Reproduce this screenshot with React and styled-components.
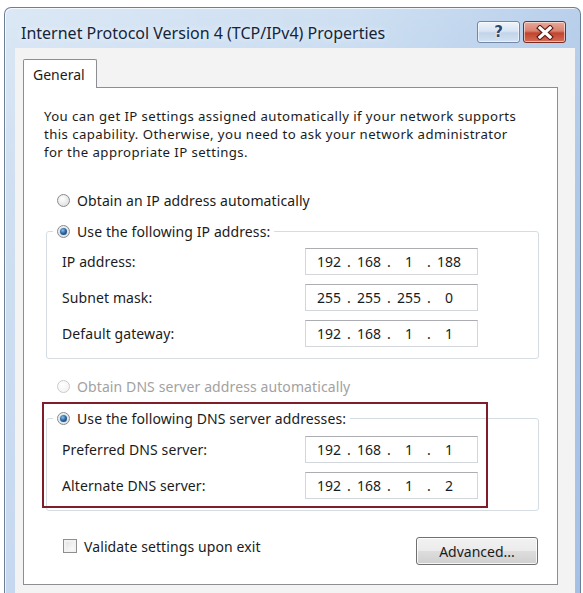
import React from "react";
import styled, { createGlobalStyle } from "styled-components";

const Global = createGlobalStyle`
  html, body { margin: 0; padding: 0; background: #ffffff; }
  body { font-family: "Noto Sans", "Open Sans", sans-serif; color: #1b1b1b; }
  * { box-sizing: border-box; }
`;

const Window = styled.div`
  margin: 7px 0 0 4px;
  width: 577px;
  height: 600px;
  border: 1px solid #6b7f96;
  border-bottom: none;
  border-radius: 7px 7px 0 0;
  background:
    linear-gradient(90deg, rgba(255,255,255,0.25) 0%, rgba(255,255,255,0) 60%, rgba(120,160,215,0.25) 100%),
    linear-gradient(180deg, #cfe0f2 0%, #c0d5ed 30%, #b3cbea 100%);
  padding: 0 5px 0 10px;
  display: flex;
  flex-direction: column;
  overflow: hidden;
  box-shadow: inset 1px 1px 0 rgba(255,255,255,0.7);
`;

const TitleBar = styled.div`
  height: 40px;
  display: flex;
  align-items: flex-start;
  padding-left: 6px;
`;

const Title = styled.div`
  flex: 1;
  margin-top: 14px;
  font-size: 16px;
  line-height: 22px;
  color: #13253b;
  text-shadow: 0 0 6px rgba(255,255,255,0.9);
`;

const CaptionButton = styled.div`
  width: 43px;
  height: 22px;
  margin-top: 13px;
  border-radius: 3px;
  display: flex;
  align-items: center;
  justify-content: center;
  border: 1px solid ${p => (p.$close ? "#7a2b24" : "#7189a6")};
  background: ${p =>
    p.$close
      ? "linear-gradient(180deg, #eaa899 0%, #d9826f 45%, #c0452f 55%, #d66d55 100%)"
      : "linear-gradient(180deg, #eef4fb 0%, #d9e5f3 45%, #c3d4ea 55%, #d3e2f3 100%)"};
  box-shadow: inset 0 0 0 1px rgba(255,255,255,0.55);
  margin-left: ${p => (p.$close ? "3px" : "0")};
  margin-right: ${p => (p.$close ? "9px" : "0")};
`;

const HelpGlyph = styled.span`
  font-family: "DejaVu Sans", sans-serif;
  font-weight: bold;
  font-size: 15px;
  color: #2a4a70;
  text-shadow: 0 0 2px #ffffff, 0 0 1px #ffffff;
  line-height: 1;
`;

const Client = styled.div`
  flex: 1;
  background: #f3f3f3;
  padding: 11px 16px 0 8px;
  display: flex;
  flex-direction: column;
`;

const Tab = styled.div`
  width: 74px;
  height: 29px;
  border: 1px solid #8c8e94;
  border-bottom: none;
  background: #ffffff;
  font-size: 14px;
  padding: 5px 0 0 9px;
  margin-bottom: -1px;
  position: relative;
  z-index: 1;
  border-radius: 2px 2px 0 0;
`;

const Panel = styled.div`
  width: 535px;
  height: 498px;
  border: 1px solid #8c8e94;
  background: #ffffff;
  padding: 19px 18px 0 20px;
  display: flex;
  flex-direction: column;
`;

const Intro = styled.p`
  margin: 0;
  font-size: 13.2px;
  letter-spacing: 0.42px;
  line-height: 18px;
`;

const OptionRow = styled.div`
  height: 20px;
  display: flex;
  align-items: center;
  gap: 7px;
  font-size: 14px;
  letter-spacing: 0.1px;
  margin-left: 13px;
  margin-top: ${p => p.$top || 0}px;
  color: ${p => (p.$disabled ? "#a2a2a2" : "#1b1b1b")};
`;

const Radio = styled.span`
  width: 13px;
  height: 13px;
  border-radius: 50%;
  border: 1px solid ${p => (p.$disabled ? "#cbcbcb" : "#8b8b8b")};
  background: ${p =>
    p.$disabled
      ? "radial-gradient(circle at 40% 35%, #ffffff 0%, #f0f0f0 100%)"
      : "radial-gradient(circle at 40% 35%, #ffffff 0%, #d8d8d8 100%)"};
  display: flex;
  align-items: center;
  justify-content: center;
  flex-shrink: 0;
  &::after {
    content: "";
    display: ${p => (p.$checked ? "block" : "none")};
    width: 7px;
    height: 7px;
    border-radius: 50%;
    background: radial-gradient(circle at 40% 35%, #8fc0ea 0%, #2d6aa5 45%, #12304f 100%);
    box-shadow: 0 0 0 1px #d6e6f4;
  }
`;

const Group = styled.div`
  margin: ${p => p.$top}px 0 0 2px;
  border: 1px solid #d5dde3;
  border-radius: 3px;
  padding: 0 0 11px 15px;
  display: flex;
  flex-direction: column;
`;

const Legend = styled.div`
  margin: -11px 0 0 -9px;
  height: 20px;
  padding: 0 4px;
  align-self: flex-start;
  background: #ffffff;
  display: flex;
  align-items: center;
  gap: 7px;
  font-size: 14px;
  letter-spacing: 0.1px;
`;

const Rows = styled.div`
  margin-top: ${p => p.$top}px;
  display: flex;
  flex-direction: column;
  gap: 9px;
`;

const FieldRow = styled.div`
  display: flex;
  align-items: center;
  height: 27px;
  font-size: 14px;
  letter-spacing: 0.1px;
`;

const FieldLabel = styled.span`
  width: 243px;
`;

const IpBox = styled.div`
  width: 173px;
  height: 27px;
  border: 1px solid #d3d6da;
  border-top-color: #abadb3;
  background: #ffffff;
  display: flex;
  align-items: center;
  padding-left: 6px;
  font-size: 14px;
  letter-spacing: 0;
`;

const Octet = styled.span`
  width: 34px;
  text-align: center;
`;

const Dot = styled.span`
  width: 6px;
  text-align: center;
`;

const DnsSection = styled.div`
  position: relative;
`;

const Highlight = styled.div`
  position: absolute;
  left: -2px;
  top: 6px;
  width: 446px;
  height: 106px;
  border: 2px solid #7f1d2b;
  pointer-events: none;
`;

const Footer = styled.div`
  margin-top: 26px;
  display: flex;
  align-items: flex-start;
  justify-content: space-between;
  padding: 0 1px 0 19px;
`;

const CheckLabel = styled.label`
  display: flex;
  align-items: center;
  gap: 7px;
  font-size: 14px;
  letter-spacing: 0.1px;
  height: 16px;
  margin-top: 1px;
`;

const CheckBox = styled.span`
  width: 14px;
  height: 14px;
  border: 1px solid #8e8f8f;
  background: linear-gradient(135deg, #dcdcdc 0%, #f4f4f4 60%, #ffffff 100%);
  box-shadow: inset 0 0 0 2px #f2f2f2;
`;

const Button = styled.div`
  width: 122px;
  height: 28px;
  border: 1px solid #707070;
  border-radius: 3px;
  background: linear-gradient(180deg, #f2f2f2 0%, #ebebeb 48%, #dddddd 52%, #cfcfcf 100%);
  box-shadow: inset 0 0 0 1px rgba(255,255,255,0.8);
  display: flex;
  align-items: center;
  justify-content: center;
  font-size: 14px;
`;

const CloseIcon = () => (
  <svg width="18" height="15" viewBox="0 0 18 15">
    <path d="M4 3 L14 12 M14 3 L4 12" stroke="#5a1a14" strokeWidth="5.4" strokeLinecap="square" />
    <path d="M4 3 L14 12 M14 3 L4 12" stroke="#ffffff" strokeWidth="3.2" strokeLinecap="square" />
  </svg>
);

const Ip = ({ parts }) => (
  <IpBox>
    <Octet>{parts[0]}</Octet>
    <Dot>.</Dot>
    <Octet>{parts[1]}</Octet>
    <Dot>.</Dot>
    <Octet>{parts[2]}</Octet>
    <Dot>.</Dot>
    <Octet>{parts[3]}</Octet>
  </IpBox>
);

export default function App() {
  return (
    <>
      <Global />
      <Window>
        <TitleBar>
          <Title>Internet Protocol Version 4 (TCP/IPv4) Properties</Title>
          <CaptionButton>
            <HelpGlyph>?</HelpGlyph>
          </CaptionButton>
          <CaptionButton $close>
            <CloseIcon />
          </CaptionButton>
        </TitleBar>
        <Client>
          <Tab>General</Tab>
          <Panel>
            <Intro>
              You can get IP settings assigned automatically if your network supports
              <br />
              this capability. Otherwise, you need to ask your network administrator
              <br />
              for the appropriate IP settings.
            </Intro>
            <OptionRow $top={29}>
              <Radio />
              Obtain an IP address automatically
            </OptionRow>
            <Group $top={21}>
              <Legend>
                <Radio $checked />
                Use the following IP address:
              </Legend>
              <Rows $top={7}>
                <FieldRow>
                  <FieldLabel>IP address:</FieldLabel>
                  <Ip parts={["192", "168", "1", "188"]} />
                </FieldRow>
                <FieldRow>
                  <FieldLabel>Subnet mask:</FieldLabel>
                  <Ip parts={["255", "255", "255", "0"]} />
                </FieldRow>
                <FieldRow>
                  <FieldLabel>Default gateway:</FieldLabel>
                  <Ip parts={["192", "168", "1", "1"]} />
                </FieldRow>
              </Rows>
            </Group>
            <OptionRow $top={17} $disabled>
              <Radio $disabled />
              Obtain DNS server address automatically
            </OptionRow>
            <DnsSection>
              <Group $top={22}>
                <Legend>
                  <Radio $checked />
                  Use the following DNS server addresses:
                </Legend>
                <Rows $top={8}>
                  <FieldRow>
                    <FieldLabel>Preferred DNS server:</FieldLabel>
                    <Ip parts={["192", "168", "1", "1"]} />
                  </FieldRow>
                  <FieldRow>
                    <FieldLabel>Alternate DNS server:</FieldLabel>
                    <Ip parts={["192", "168", "1", "2"]} />
                  </FieldRow>
                </Rows>
              </Group>
              <Highlight />
            </DnsSection>
            <Footer>
              <CheckLabel>
                <CheckBox />
                Validate settings upon exit
              </CheckLabel>
              <Button>Advanced...</Button>
            </Footer>
          </Panel>
        </Client>
      </Window>
    </>
  );
}
